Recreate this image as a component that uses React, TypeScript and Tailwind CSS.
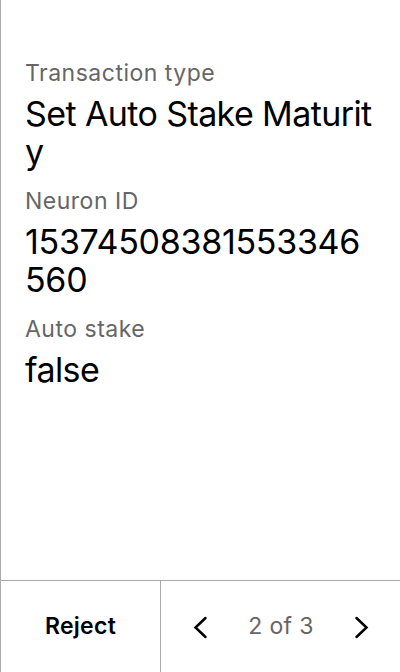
const fields = [
  { label: "Transaction type", value: "Set Auto Stake Maturity", tight: true },
  { label: "Neuron ID", value: "15374508381553346560", tight: false },
  { label: "Auto stake", value: "false", tight: true },
];

function Chevron({ dir }: { dir: "left" | "right" }) {
  return (
    <svg width="32" height="32" viewBox="0 0 32 32" fill="none" stroke="#000" strokeWidth="2.5" strokeLinecap="round">
      {dir === "left" ? <path d="M21.5 7 11.5 16.5 21.5 26" /> : <path d="M10.5 7 20.5 16.5 10.5 26" />}
    </svg>
  );
}

export default function App() {
  return (
    <div className="flex h-[672px] w-[400px] flex-col border-l border-[#aaaaaa] bg-white font-['Inter',sans-serif] text-black">
      {/* Fields */}
      <div className="flex flex-1 flex-col gap-4 pl-6 pt-[59px]">
        {fields.map((f) => (
          <div key={f.label} className="w-[348px]">
            <div className="mb-2 text-[23px] leading-[28px] tracking-[0.5px] text-[#666666]">{f.label}</div>
            <div className={`break-all text-[34px] leading-[38px] ${f.tight ? "tracking-[-0.6px]" : "tracking-[-0.3px]"}`}>
              {f.value}
            </div>
          </div>
        ))}
      </div>

      {/* Footer */}
      <div className="flex h-[92px] border-t border-[#aaaaaa]">
        <button className="w-[160px] border-r border-[#aaaaaa] text-[23px] font-semibold tracking-[0.3px]">
          Reject
        </button>
        <div className="flex flex-1 items-center justify-between pl-[23px] pr-[22px]">
          <Chevron dir="left" />
          <span className="text-[23px] tracking-[0.3px] text-[#666666]">2 of 3</span>
          <Chevron dir="right" />
        </div>
      </div>
    </div>
  );
}
